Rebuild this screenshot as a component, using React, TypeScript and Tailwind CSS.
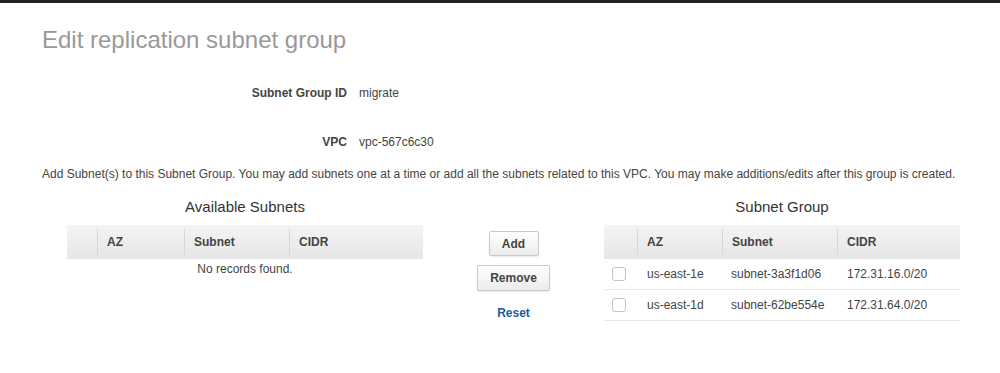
import React from "react";

type Col = { label: string; w: string };

const leftCols: Col[] = [
  { label: "AZ", w: "w-[87px]" },
  { label: "Subnet", w: "w-[105px]" },
  { label: "CIDR", w: "flex-1" },
];

const rightCols: Col[] = [
  { label: "AZ", w: "w-[85px]" },
  { label: "Subnet", w: "w-[115px]" },
  { label: "CIDR", w: "flex-1" },
];

const groupRows = [
  { az: "us-east-1e", subnet: "subnet-3a3f1d06", cidr: "172.31.16.0/20" },
  { az: "us-east-1d", subnet: "subnet-62be554e", cidr: "172.31.64.0/20" },
];

function TableHeader({ first, cols }: { first: string; cols: Col[] }) {
  return (
    <div className="flex h-[34px] items-center bg-gradient-to-b from-[#f4f4f4] to-[#e6e6e6] text-[12px] font-bold text-[#444]">
      <div className={first} />
      {cols.map((c) => (
        <div key={c.label} className={`${c.w} flex h-[26px] items-center border-l border-[#d6d6d6] pl-[9px]`}>
          {c.label}
        </div>
      ))}
    </div>
  );
}

export default function App() {
  return (
    <div className="min-h-screen bg-white font-['Liberation_Sans',Arial,sans-serif] text-[#444]">
      <div className="h-[3px] bg-[#232323]" />
      <div className="pl-[42px] pr-[30px]">
        <h1 className="mt-[23px] text-[24px] leading-[28px] text-[#999]">Edit replication subnet group</h1>

        {/* form fields */}
        <div className="mt-[29px] flex text-[12px] leading-[20px]">
          <div className="w-[305px] text-right font-bold">Subnet Group ID</div>
          <div className="ml-[12px]">migrate</div>
        </div>
        <div className="mt-[29px] flex text-[12px] leading-[20px]">
          <div className="w-[305px] text-right font-bold">VPC</div>
          <div className="ml-[12px]">vpc-567c6c30</div>
        </div>

        <p className="mt-[13px] text-[12px] leading-[18px]">
          Add Subnet(s) to this Subnet Group. You may add subnets one at a time or add all the subnets related to this VPC. You may make additions/edits after this group is created.
        </p>

        <div className="mt-[14px] flex items-start pl-[25px]">
          {/* Available subnets */}
          <div className="w-[356px] shrink-0">
            <h2 className="mb-[8px] text-center text-[15px] leading-[20px] text-[#333]">Available Subnets</h2>
            <TableHeader first="w-[30px]" cols={leftCols} />
            <div className="pt-[2px] text-center text-[12px] leading-[16px]">No records found.</div>
          </div>

          {/* buttons */}
          <div className="flex w-[181px] shrink-0 flex-col items-center pt-[34px]">
            <button className="h-[25px] w-[50px] rounded-[2px] border border-[#c8c8c8] bg-gradient-to-b from-white to-[#ececec] text-[12px] font-bold text-[#444] shadow-[0_1px_1px_rgba(0,0,0,0.08)]">
              Add
            </button>
            <button className="mt-[9px] h-[26px] w-[73px] rounded-[2px] border border-[#c8c8c8] bg-gradient-to-b from-white to-[#ececec] text-[12px] font-bold text-[#444] shadow-[0_1px_1px_rgba(0,0,0,0.08)]">
              Remove
            </button>
            <a className="mt-[14px] text-[12px] font-bold leading-[16px] text-[#1d5d9b]">Reset</a>
          </div>

          {/* Subnet group */}
          <div className="w-[356px] shrink-0">
            <h2 className="mb-[8px] text-center text-[15px] leading-[20px] text-[#333]">Subnet Group</h2>
            <TableHeader first="w-[33px]" cols={rightCols} />
            {groupRows.map((r) => (
              <div key={r.subnet} className="flex h-[31px] items-center border-b border-[#e6e6e6] text-[12px]">
                <div className="w-[33px] pl-[8px]">
                  <div className="h-[14px] w-[14px] rounded-[3px] border border-[#c4c4c4] bg-white" />
                </div>
                <div className="w-[85px] pl-[10px]">{r.az}</div>
                <div className="w-[115px] pl-[9px]">{r.subnet}</div>
                <div className="flex-1 pl-[10px]">{r.cidr}</div>
              </div>
            ))}
          </div>
        </div>
      </div>
    </div>
  );
}
